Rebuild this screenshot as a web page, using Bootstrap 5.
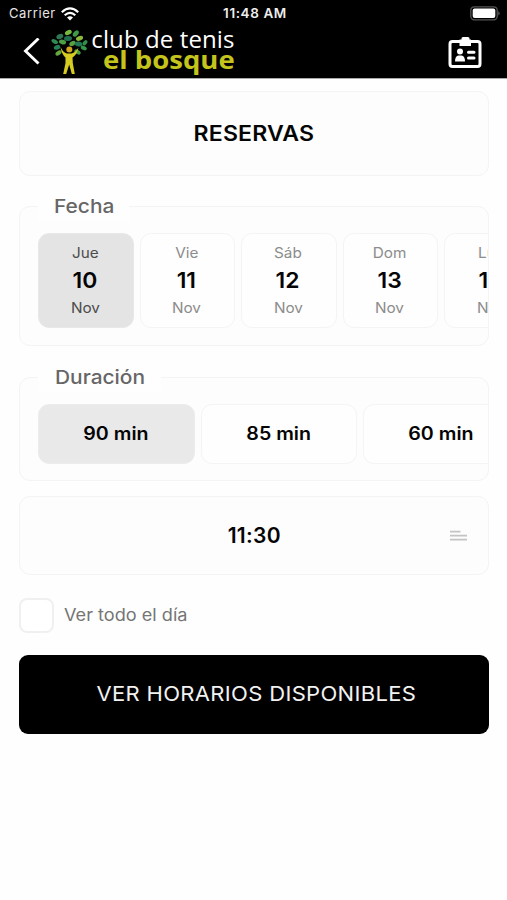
<!DOCTYPE html>
<html lang="es">
<head>
<meta charset="utf-8">
<meta name="viewport" content="width=device-width, initial-scale=1">
<title>Reservas</title>
<link href="https://cdn.jsdelivr.net/npm/bootstrap@5.3.0/dist/css/bootstrap.min.css" rel="stylesheet">
<style>
body{font-family:Inter,"Liberation Sans",sans-serif;background:#fefefe;height:900px;overflow:hidden;color:#050505}
.topbar{height:79px;border-bottom:1px solid #aaa;box-sizing:border-box;color:#fff}
.status{height:27px;padding:0 6px 0 9px;font-size:13px}
.status>div{flex:1 1 0}
.carrier{letter-spacing:.6px;color:#e6e6e6}
.clock{font-weight:600;font-size:13.5px;letter-spacing:.6px;color:#eee}
.brandrow{height:49px;padding:0 25px 0 23px}
.brand-name{font-family:"Open Sans","Noto Sans",sans-serif;line-height:20px;margin:-5px 0 0 3px;width:142.5px}
.brand-a{font-size:24px;letter-spacing:.1px;white-space:nowrap}
.brand-b{font-size:25px;font-weight:700;color:#c4c41c;white-space:nowrap;transform:scaleX(1.1);transform-origin:right}
.page{padding:12px 18.5px 0 19px}
.panel{border:1.5px solid #f4f4f4;border-radius:11px;background:#fdfdfd}
/* widened letterforms, closer to a geometric sans */
.wide{display:inline-block;transform:scaleX(1.1)}
.wide-start{transform-origin:left}
.title-box{height:85px;font-size:21px;font-weight:600;letter-spacing:.15px}
.group-label{background:#fefefe;color:#666;font-weight:500;font-size:19px;line-height:28px}
.strip{overflow:hidden;padding-left:18px}
.day{flex:0 0 95.5px;height:95px;border:1.5px solid #f4f4f4;border-radius:11px;background:#fefefe;color:#8c8c8c;font-size:14.2px;padding-right:1.500px}
.day b{font-size:22px;font-weight:600;color:#050505;line-height:29px;transform:scaleX(1.04)}
.day span{line-height:25px;transform:scaleX(1.08)}
.day span:first-child{margin-top:-1px;padding-bottom:1px}
.day.on{background:#e4e4e4;border-color:#e8e8e8;color:#4c4c4c}
.slot{flex:0 0 156.5px;height:60px;border:1.5px solid #f4f4f4;border-radius:11px;background:#fefefe;font-size:18px;font-weight:600;padding-bottom:2px}
.slot span{transform:scaleX(1.09)}
.slot.on{background:#e9e9e9;border-color:#ececec}
.time-box{height:79px;margin-top:15px;font-size:21px;font-weight:600;letter-spacing:.3px}
.check{width:34.5px;height:34.5px;border:2px solid #f0f0f0;border-radius:8px;background:#fff}
.check-label{font-size:16.8px;color:#757575;transform:scaleX(1.08)}
.cta{height:79.5px;background:#000;color:#f2f2f2;border-radius:9px;font-size:20px;letter-spacing:.3px}
.cta:hover{background:#000;color:#fff}
</style>
<script src="https://cdn.jsdelivr.net/npm/bootstrap@5.3.0/dist/js/bootstrap.bundle.min.js"></script>
</head>
<body>
<header class="topbar bg-black">
  <div class="status d-flex align-items-center">
    <div class="d-flex align-items-center"><span class="carrier">Carrier</span>
      <svg style="margin-left:5px" width="18" height="14" viewBox="0 0 18 14" fill="none" stroke="#fff" stroke-width="2.2"><path d="M.8 5.2Q9-2.3 17.2 5.2M3.7 8.2Q9 3.4 14.3 8.2"/><path d="M6 10.5Q9 8 12 10.5L9 13.6Z" fill="#fff" stroke="none"/></svg>
    </div>
    <span class="clock">11:48 AM</span>
    <div class="d-flex justify-content-end">
      <svg width="31" height="15" viewBox="0 0 31 15"><rect x=".8" y=".8" width="26.400" height="13" rx="3.500" fill="#000" stroke="#555" stroke-width="1.300"/><rect x="2.700" y="2.600" width="22.600" height="9.400" rx="2" fill="#fff"/><path d="M28.400 5Q31 7.300 28.400 9.600Z" fill="#666"/></svg>
    </div>
  </div>
  <div class="brandrow d-flex align-items-center">
    <svg width="18" height="28" viewBox="0 0 18 28" fill="none" stroke="#fff" stroke-width="2.900"><path d="M15.500 .5 2.500 13 15.500 25.500"/></svg>
    <svg style="margin-left:10px" width="38" height="48" viewBox="51 28 38 48">
      <ellipse cx="68.300" cy="32.500" rx="3.600" ry="2.300" transform="rotate(-25 68.300 32.500)" fill="#78b83e"/>
      <ellipse cx="75.800" cy="33.500" rx="3.700" ry="2.300" transform="rotate(-50 75.800 33.500)" fill="#3d9a49"/>
      <ellipse cx="59.800" cy="36.500" rx="3.600" ry="2.400" transform="rotate(-25 59.800 36.500)" fill="#2e7752"/>
      <ellipse cx="68" cy="38.500" rx="4" ry="2.400" transform="rotate(-5 68 38.500)" fill="#216d50"/>
      <ellipse cx="79.500" cy="38.300" rx="3.700" ry="2.300" transform="rotate(-20 79.500 38.300)" fill="#8cb83d"/>
      <ellipse cx="54.700" cy="41.600" rx="3.500" ry="2" transform="rotate(25 54.700 41.600)" fill="#2e8b50"/>
      <ellipse cx="62.500" cy="42" rx="3.600" ry="2.300" transform="rotate(15 62.500 42)" fill="#4c9e42"/>
      <ellipse cx="72.500" cy="43.500" rx="3.400" ry="2.200" transform="rotate(-30 72.500 43.500)" fill="#58a040"/>
      <ellipse cx="78.500" cy="44" rx="3.800" ry="2.500" transform="rotate(10 78.500 44)" fill="#237754"/>
      <ellipse cx="85" cy="42.800" rx="3" ry="1.900" transform="rotate(-50 85 42.800)" fill="#319048"/>
      <ellipse cx="57" cy="47.300" rx="3.300" ry="2.300" transform="rotate(-20 57 47.300)" fill="#238052"/>
      <ellipse cx="83.800" cy="48" rx="3.200" ry="2" transform="rotate(25 83.800 48)" fill="#35954a"/>
      <ellipse cx="58.500" cy="53" rx="3.400" ry="2" transform="rotate(-35 58.500 53)" fill="#65a93c"/>
      <ellipse cx="77.500" cy="52" rx="3.400" ry="2.100" transform="rotate(30 77.500 52)" fill="#48a044"/>
      <circle cx="69.300" cy="49.500" r="3" fill="#d2a51d"/>
      <path d="M60.500 47Q63 52.500 67 53.500H71.500Q75.500 52.500 78.500 47.500 77 54.500 72.500 57.500L72.800 63 74.800 74H71.800L69.200 64.500 66.200 74H63.200L65.500 63V57.500Q61.500 54 60.500 47Z" fill="#d6cb20"/>
    </svg>
    <div class="brand-name d-flex flex-column align-items-end"><span class="brand-a">club de tenis</span><span class="brand-b">el bosque</span></div>
    <svg class="ms-auto" style="margin-top:2px" width="34" height="32" viewBox="0 0 34 32"><rect x="2" y="4.500" width="30" height="25" rx="2.500" fill="none" stroke="#fff" stroke-width="3"/><path d="M13.500 1.500Q13.500 0 15 0H20Q21.500 0 21.500 1.500V2.500H23V9H11.500V2.500H13.500Z" fill="#fff"/><circle cx="12" cy="14.500" r="3" fill="#fff"/><path d="M7 24.500Q7 19 10.500 18.500H13.500Q17 19 17 24.500Z" fill="#fff"/><path d="M20.500 15.200H26M20.500 21H26" stroke="#fff" stroke-width="3" stroke-linecap="round"/></svg>
  </div>
</header>
<main class="page">
  <h1 class="panel title-box d-flex align-items-center justify-content-center mb-0"><span class="wide">RESERVAS</span></h1>
  <section class="panel" style="margin-top:30px;height:140px">
    <div class="group-label" style="margin:-14px 0 0 18px;padding-left:16px;width:91px"><span class="wide wide-start">Fecha</span></div>
    <div class="strip d-flex" style="gap:6px;margin-top:12px">
      <div class="day on d-flex flex-column align-items-center justify-content-center"><span>Jue</span><b>10</b><span>Nov</span></div>
      <div class="day d-flex flex-column align-items-center justify-content-center"><span>Vie</span><b>11</b><span>Nov</span></div>
      <div class="day d-flex flex-column align-items-center justify-content-center"><span>Sáb</span><b>12</b><span>Nov</span></div>
      <div class="day d-flex flex-column align-items-center justify-content-center"><span>Dom</span><b>13</b><span>Nov</span></div>
      <div class="day d-flex flex-column align-items-center justify-content-center"><span>Lun</span><b>14</b><span>Nov</span></div>
    </div>
  </section>
  <section class="panel" style="margin-top:31px;height:104px">
    <div class="group-label" style="margin:-14px 0 0 18px;padding-left:16.500px;width:123px"><span class="wide wide-start">Duración</span></div>
    <div class="strip d-flex" style="gap:6px;margin-top:12px">
      <div class="slot on d-flex align-items-center justify-content-center"><span>90 min</span></div>
      <div class="slot d-flex align-items-center justify-content-center"><span>85 min</span></div>
      <div class="slot d-flex align-items-center justify-content-center"><span>60 min</span></div>
    </div>
  </section>
  <div class="panel time-box d-flex align-items-center justify-content-between" style="padding:0 20px">
    <span style="width:18px"></span><span>11:30</span>
    <svg width="17" height="12" viewBox="0 0 17 12" stroke="#c4c4c4" stroke-width="1.700"><path d="M0 1.700H10.500M0 5.700H17M0 9.700H17"/></svg>
  </div>
  <div class="d-flex align-items-center" style="margin-top:23px"><div class="check"></div><span class="check-label wide-start" style="margin-left:10px">Ver todo el día</span></div>
  <button class="btn cta w-100 border-0" style="margin-top:22px;padding:0 0 0 5px"><span class="wide">VER HORARIOS DISPONIBLES</span></button>
</main>
</body>
</html>
